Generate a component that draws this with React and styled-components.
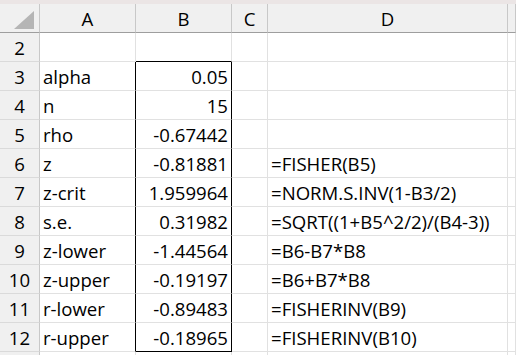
import styled, { createGlobalStyle } from "styled-components"

const GlobalStyle = createGlobalStyle`
  html, body {
    margin: 0;
    padding: 0;
    background: #ffffff;
    overflow: hidden;
  }
`

const Sheet = styled.div`
  width: 516px;
  height: 355px;
  overflow: hidden;
  font-family: "Open Sans", "DejaVu Sans", sans-serif;
  font-size: 18.6px;
  color: #000;
  background: #fff;
`

const TopStrip = styled.div`
  height: 4px;
  background: #ebe5e5;
`

const Row = styled.div`
  display: grid;
  grid-template-columns: 40px 96px 96px 36px 240px 1fr;
  height: 29px;
`

const Cell = styled.div`
  box-sizing: border-box;
  height: 100%;
  display: flex;
  align-items: center;
  padding: 1px 3px 0 3px;
  white-space: nowrap;
  overflow: hidden;
  border-right: 1px solid ${p => (p.boxRight ? "#000" : "#e1e1e1")};
  border-bottom: 1px solid ${p => (p.boxBottom ? "#000" : "#e1e1e1")};
  justify-content: ${p => (p.num ? "flex-end" : "flex-start")};
`

const ColHead = styled(Cell)`
  background: #f0f0f0;
  justify-content: center;
  padding: 0;
  border-right-color: #c8c8c8;
  border-bottom-color: #9e9e9e;
`

const RowHead = styled(Cell)`
  background: #f0f0f0;
  justify-content: center;
  padding: 1px 0 0 0;
  border-right-color: #c8c8c8;
  border-bottom-color: #dadada;
`

const Corner = () => (
  <svg width="22" height="19" viewBox="0 0 22 19" style={{ marginLeft: 8, marginTop: 4 }}>
    <polygon points="21,0 21,18 1,18" fill="#b5b5b5" />
  </svg>
)

const rows = [
  [2, "", "", ""],
  [3, "alpha", "0.05", ""],
  [4, "n", "15", ""],
  [5, "rho", "-0.67442", ""],
  [6, "z", "-0.81881", "=FISHER(B5)"],
  [7, "z-crit", "1.959964", "=NORM.S.INV(1-B3/2)"],
  [8, "s.e.", "0.31982", "=SQRT((1+B5^2/2)/(B4-3))"],
  [9, "z-lower", "-1.44564", "=B6-B7*B8"],
  [10, "z-upper", "-0.19197", "=B6+B7*B8"],
  [11, "r-lower", "-0.89483", "=FISHERINV(B9)"],
  [12, "r-upper", "-0.18965", "=FISHERINV(B10)"],
]

const App = () => {
  return (
    <Sheet>
      <GlobalStyle />
      <TopStrip />
      <Row>
        <ColHead><Corner /></ColHead>
        <ColHead>A</ColHead>
        <ColHead>B</ColHead>
        <ColHead>C</ColHead>
        <ColHead>D</ColHead>
        <ColHead />
      </Row>
      {rows.map(([n, label, value, formula]) => {
        const inBox = n >= 3
        return (
          <Row key={n}>
            <RowHead>{n}</RowHead>
            <Cell boxRight={inBox}>{label}</Cell>
            <Cell num boxRight={inBox} boxBottom={n === 2 || n === 12}>
              {value}
            </Cell>
            <Cell />
            <Cell>{formula}</Cell>
            <Cell />
          </Row>
        )
      })}
      {/* next row, only its top edge shows */}
      <Row>
        <RowHead />
        <Cell />
        <Cell />
        <Cell />
        <Cell />
        <Cell />
      </Row>
    </Sheet>
  )
}

export default App
